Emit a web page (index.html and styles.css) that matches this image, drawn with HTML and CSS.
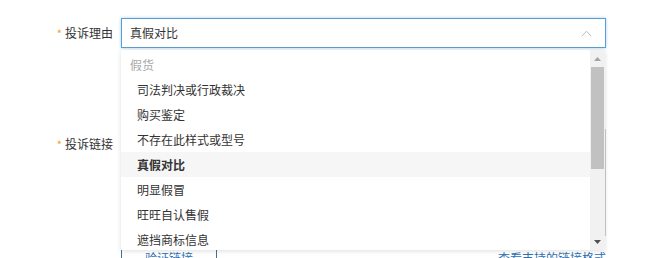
FILE: index.html
```html
<!DOCTYPE html>
<html lang="zh-CN">
<head>
<meta charset="utf-8">
<link rel="stylesheet" href="styles.css">
</head>
<body>
<div class="form">
  <div class="row">
    <div class="label"><span class="req">*</span>投诉理由</div>
    <div class="field">
      <div class="select">
        <span class="value">真假对比</span>
        <svg class="caret" width="11" height="7" viewBox="0 0 11 7"><path d="M0.8 6.2 L5.5 1.2 L10.2 6.2" fill="none" stroke="#bdbdbd" stroke-width="1"/></svg>
      </div>
      <div class="dropdown">
        <ul class="options">
          <li class="group">假货</li>
          <li class="opt">司法判决或行政裁决</li>
          <li class="opt">购买鉴定</li>
          <li class="opt">不存在此样式或型号</li>
          <li class="opt active">真假对比</li>
          <li class="opt">明显假冒</li>
          <li class="opt">旺旺自认售假</li>
          <li class="opt">遮挡商标信息</li>
          <li class="opt">其他</li>
        </ul>
        <div class="scrollbar">
          <div class="arrow up"><svg width="7" height="4" viewBox="0 0 7 4"><path d="M0 4 L3.5 0 L7 4 Z" fill="#a3a3a3"/></svg></div>
          <div class="thumb"></div>
          <div class="track"></div>
          <div class="arrow down"><svg width="7" height="4" viewBox="0 0 7 4"><path d="M0 0 L3.5 4 L7 0 Z" fill="#505050"/></svg></div>
        </div>
      </div>
    </div>
  </div>
  <div class="row row2">
    <div class="label"><span class="req">*</span>投诉链接</div>
    <div class="field">
      <div class="textarea"></div>
      <div class="actions">
        <button class="btn">验证链接</button>
        <a class="link">查看支持的链接格式</a>
      </div>
    </div>
  </div>
</div>
</body>
</html>
```
FILE: styles.css
```css
* { box-sizing: border-box; }
html, body { margin: 0; padding: 0; background: #fff; }
body {
  font-family: "Noto Sans CJK SC", "Microsoft YaHei", sans-serif;
  font-size: 12px;
  color: #333;
  width: 669px;
  height: 258px;
  overflow: hidden;
}
.form { padding-top: 18px; }
.row { display: flex; align-items: flex-start; }
.row2 { margin-top: 81px; }
.label {
  width: 121px;
  padding-right: 8px;
  text-align: right;
  line-height: 30px;
  height: 30px;
  color: #333;
}
.req { color: #f0a030; margin-right: 3px; font-size: 11px; }
.field { width: 485px; position: relative; }
.select {
  height: 30px;
  border: 1px solid #5a9fd0;
  box-shadow: 0 0 3px rgba(90, 170, 225, 0.55);
  display: flex;
  align-items: center;
  justify-content: space-between;
  padding: 0 13px 0 8px;
  background: #fff;
}
.value { color: #333; line-height: 28px; }
.caret { display: block; margin-top: 1px; }
.dropdown {
  position: absolute;
  left: 0;
  top: 32px;
  width: 484px;
  height: 200px;
  background: #fff;
  box-shadow: 0 1px 5px rgba(0, 0, 0, 0.13);
  display: flex;
  overflow: hidden;
  z-index: 5;
}
.options {
  list-style: none;
  margin: 0;
  padding: 2px 0 0;
  flex: 1;
}
.options li { height: 25px; line-height: 25px; white-space: nowrap; }
.group { color: #aaa; padding-left: 9px; }
.opt { padding-left: 16px; color: #333; }
.opt.active { background: #f6f6f6; font-weight: bold; }
.scrollbar {
  width: 15px;
  background: #f1f1f1;
  display: flex;
  flex-direction: column;
  align-items: center;
}
.arrow { height: 17px; width: 15px; display: flex; align-items: center; justify-content: center; }
.arrow svg { display: block; }
.thumb { width: 13px; height: 102px; background: #c1c1c1; }
.track { flex: 1; }
.textarea { height: 107px; border: 1px solid #ccc; }
.actions {
  margin-top: 8px;
  display: flex;
  justify-content: space-between;
  align-items: center;
}
.btn {
  width: 96px;
  height: 26px;
  border: 1px solid #4a6f8f;
  background: #fff;
  color: #2f6fb2;
  font-family: inherit;
  font-size: 12px;
  padding: 0;
}
.link { color: #2f6fb2; text-decoration: none; }
```
